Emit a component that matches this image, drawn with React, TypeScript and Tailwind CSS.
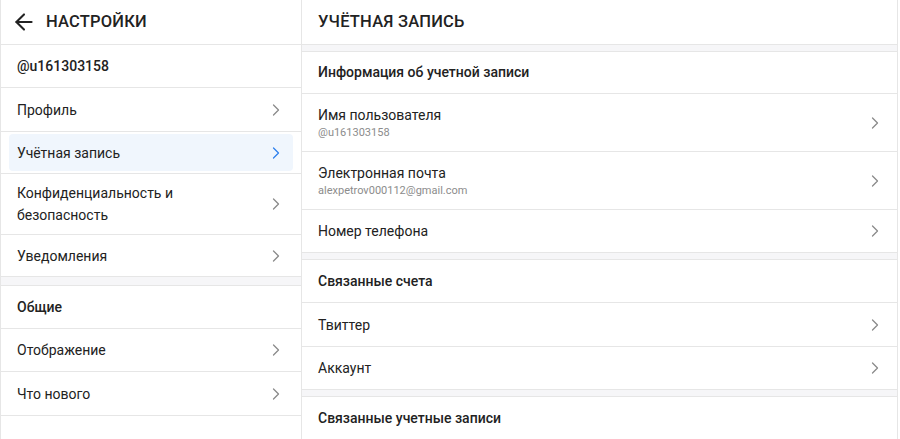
import { ArrowLeft, ChevronRight } from 'lucide-react';

function Chevron({ active }: { active?: boolean }) {
  return (
    <ChevronRight
      size={20}
      strokeWidth={1.5}
      className={active ? 'text-[#2f80ed]' : 'text-[#8a8a8a]'}
    />
  );
}

function NavRow({ label, active, h = 'h-[43px]' }: { label: string; active?: boolean; h?: string }) {
  return (
    <div className={`shrink-0 border-b border-[#e6e6e6] px-2 py-[2px] ${h}`}>
      <div
        className={`flex h-full items-center justify-between rounded pl-2 pr-[7px] ${active ? 'bg-[#f0f6fd]' : ''}`}
      >
        <span className="w-[200px] text-[14px] leading-[22px] text-[#222]">{label}</span>
        <Chevron active={active} />
      </div>
    </div>
  );
}

function Gap({ h = 'h-[7px]' }: { h?: string }) {
  return <div className={`shrink-0 border-b border-[#e6e6e6] bg-[#f6f6f8] ${h}`} />;
}

function SectionTitle({ label, h = 'h-[43px]' }: { label: string; h?: string }) {
  return (
    <div
      className={`flex shrink-0 items-center border-b border-[#e6e6e6] px-4 text-[14px] font-medium text-[#222] ${h}`}
    >
      {label}
    </div>
  );
}

function AccountRow({ label, sub, h }: { label: string; sub?: string; h?: string }) {
  return (
    <div
      className={`flex shrink-0 items-center justify-between border-b border-[#e6e6e6] pl-4 pr-3 ${h ?? (sub ? 'h-[58px]' : 'h-[43px]')}`}
    >
      <div className="flex flex-col">
        <span className="text-[14px] leading-[20px] text-[#222]">{label}</span>
        {sub && <span className="text-[11px] leading-[16px] text-[#8c8c8c]">{sub}</span>}
      </div>
      <Chevron />
    </div>
  );
}

export default function App() {
  return (
    <div className="flex h-[439px] w-[900px] overflow-hidden bg-white font-['Roboto',sans-serif]">
      <aside className="flex w-[302px] flex-col border-x border-[#e6e6e6]">
        <div className="flex h-[45px] shrink-0 items-center gap-[9px] border-b border-[#e6e6e6] px-[10px]">
          <ArrowLeft size={26} strokeWidth={1.9} className="text-[#222]" />
          <span className="text-[16.5px] font-medium tracking-[0.2px] text-[#222]">НАСТРОЙКИ</span>
        </div>
        <div className="flex h-[43px] shrink-0 items-center border-b border-[#e6e6e6] px-4 text-[14px] font-medium text-[#222]">
          @u161303158
        </div>
        <NavRow label="Профиль" h="h-[44px]" />
        <NavRow label="Учётная запись" active h="h-[42px]" />
        <NavRow label="Конфиденциальность и безопасность" h="h-[61px]" />
        <NavRow label="Уведомления" h="h-[42px]" />
        <Gap h="h-[9px]" />
        <SectionTitle label="Общие" />
        <NavRow label="Отображение" h="h-[43px]" />
        <NavRow label="Что нового" h="h-[44px]" />
      </aside>
      <main className="flex w-[596px] flex-col border-r border-[#e6e6e6]">
        <div className="flex h-[45px] shrink-0 items-center border-b border-[#e6e6e6] px-4">
          <span className="text-[16.5px] font-medium tracking-[0.2px] text-[#222]">УЧЁТНАЯ ЗАПИСЬ</span>
        </div>
        <Gap />
        <SectionTitle label="Информация об учетной записи" h="h-[42px]" />
        <AccountRow label="Имя пользователя" sub="@u161303158" />
        <AccountRow label="Электронная почта" sub="alexpetrov000112@gmail.com" />
        <AccountRow label="Номер телефона" />
        <Gap />
        <SectionTitle label="Связанные счета" />
        <AccountRow label="Твиттер" h="h-[44px]" />
        <AccountRow label="Аккаунт" />
        <Gap />
        <SectionTitle label="Связанные учетные записи" />
      </main>
    </div>
  );
}
